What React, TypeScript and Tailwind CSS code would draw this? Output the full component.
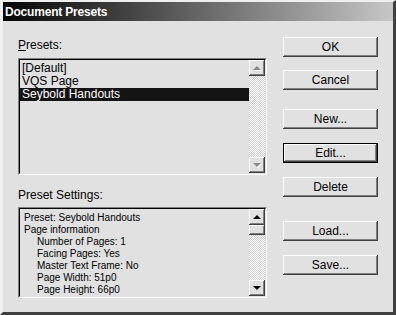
const font = { fontFamily: '"Liberation Sans", Arial, sans-serif' };

function Btn({ label, isDefault = false }: { label: string; isDefault?: boolean }) {
  return (
    <button
      type="button"
      className={
        "h-5 w-[95px] bg-[#e1e1e1] text-[12px] leading-none text-black " +
        (isDefault
          ? "border border-black shadow-[inset_-1px_-1px_#404040,inset_1px_1px_#ffffff,inset_-2px_-2px_#808080]"
          : "shadow-[inset_-1px_-1px_#404040,inset_1px_1px_#ffffff,inset_-2px_-2px_#808080]")
      }
    >
      {label}
    </button>
  );
}

function Arrow({ up, disabled }: { up: boolean; disabled?: boolean }) {
  const pts = up ? "4,6 8,2 12,6" : "4,2 8,6 12,2";
  return (
    <div className="h-4 w-4 shrink-0 bg-[#e1e1e1] shadow-[inset_-1px_-1px_#404040,inset_1px_1px_#ffffff,inset_-2px_-2px_#808080] flex items-center justify-center">
      <svg width="16" height="8" viewBox="0 0 16 8">
        {disabled && <polygon points={pts} fill="#ffffff" transform="translate(1,1)" />}
        <polygon points={pts} fill={disabled ? "#8a8a8a" : "#000000"} />
      </svg>
    </div>
  );
}

function Track({ children }: { children?: React.ReactNode }) {
  return (
    <div className="flex-1 bg-[repeating-conic-gradient(#ffffff_0_25%,#cfcfcf_0_50%)] bg-[length:2px_2px]">
      {children}
    </div>
  );
}

const settings: [string, boolean][] = [
  ["Preset: Seybold Handouts", false],
  ["Page information", false],
  ["Number of Pages: 1", true],
  ["Facing Pages: Yes", true],
  ["Master Text Frame: No", true],
  ["Page Width: 51p0", true],
  ["Page Height: 66p0", true],
];

export default function App() {
  return (
    <div
      className="w-[396px] h-[315px] flex flex-col bg-[#e1e1e1] border-l-[3px] border-t-2 border-l-[#efefef] border-t-[#efefef] border-r-[3px] border-b-[3px] border-r-[#404040] border-b-[#404040] overflow-hidden"
      style={font}
    >
      <div className="h-[19px] shrink-0 bg-[linear-gradient(to_right,#050505,#c6c6c6)] flex items-center pl-[2px]">
        <span className="text-[12px] font-bold text-white tracking-[-0.2px]">Document Presets</span>
      </div>

      <div className="flex flex-1 pl-[15px]">
        <div className="w-[249px] flex flex-col pt-[17px]">
          <div className="h-[14px] text-[12px] leading-[14px] mb-[6px]">
            <span className="underline">P</span>resets:
          </div>
          <div className="h-[117px] flex border-t border-l border-t-[#808080] border-l-[#808080] border-b border-r border-b-white border-r-white">
            <div className="flex flex-1 border-t border-l border-t-black border-l-black border-b border-r border-b-[#e1e1e1] border-r-[#e1e1e1]">
              <div className="flex-1 pt-[2px] text-[12px] leading-[13px]">
                <div className="pl-[2px]">[Default]</div>
                <div className="pl-[2px]">VQS Page</div>
                <div className="pl-[2px] bg-[#141414] text-white">Seybold Handouts</div>
              </div>
              <div className="w-4 flex flex-col">
                <Arrow up disabled />
                <Track />
                <Arrow up={false} disabled />
              </div>
            </div>
          </div>

          <div className="h-[14px] text-[12px] leading-[14px] mt-[13px] mb-[5px]">Preset Settings:</div>
          <div className="h-[91px] flex border-t border-l border-t-[#808080] border-l-[#808080] border-b border-r border-b-white border-r-white">
            <div className="flex flex-1 border-t border-l border-t-black border-l-black border-b border-r border-b-[#e1e1e1] border-r-[#e1e1e1]">
              <div className="flex-1 pt-[3px] pl-[4px] text-[10px] leading-[12px] overflow-hidden">
                {settings.map(([t, indent]) => (
                  <div key={t} className={indent ? "pl-[13px]" : ""}>
                    {t}
                  </div>
                ))}
              </div>
              <div className="w-4 flex flex-col">
                <Arrow up />
                <div className="h-[10px] bg-[#e1e1e1] shadow-[inset_-1px_-1px_#404040,inset_1px_1px_#ffffff,inset_-2px_-2px_#808080]" />
                <Track />
                <Arrow up={false} />
              </div>
            </div>
          </div>
        </div>

        <div className="ml-4 pt-4 flex flex-col">
          <Btn label="OK" />
          <div className="mt-[10px]"><Btn label="Cancel" /></div>
          <div className="mt-[15px]"><Btn label="New..." /></div>
          <div className="mt-[10px]"><Btn label="Edit..." isDefault /></div>
          <div className="mt-[10px]"><Btn label="Delete" /></div>
          <div className="mt-[20px]"><Btn label="Load..." /></div>
          <div className="mt-[10px]"><Btn label="Save..." /></div>
        </div>
      </div>
    </div>
  );
}
